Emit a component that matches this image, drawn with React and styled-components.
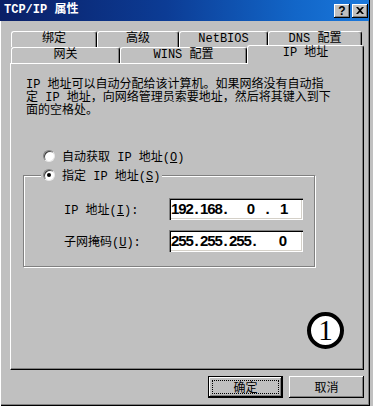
import React from "react";
import styled, { createGlobalStyle } from "styled-components";

const GlobalStyle = createGlobalStyle`
  html, body {
    margin: 0;
    padding: 0;
  }
  body {
    background: #c0c0c0;
    color: #000;
    font-family: "Liberation Mono", "Noto Sans CJK SC", monospace;
    font-size: 12px;
  }
`;

const Window = styled.div`
  display: flex;
  flex-direction: column;
  width: 370px;
  height: 406px;
  box-sizing: border-box;
  background: #c0c0c0;
  box-shadow: inset 1px 0 #fff, inset -1px -1px #000, inset -2px -2px #808080;
`;

const TitleBar = styled.div`
  display: flex;
  align-items: center;
  justify-content: space-between;
  width: 369px;
  height: 21px;
  padding: 0 1px 0 4px;
  box-sizing: border-box;
  background: linear-gradient(to right, #0a1f66 0%, #0c3c95 45%, #1266c8 80%, #1a78dc 100%);
  color: #fff;
`;

const Title = styled.div`
  font-weight: bold;
  font-size: 12px;
  line-height: 21px;
`;

const TitleButtons = styled.div`
  display: flex;
  gap: 2px;
`;

const TitleButton = styled.div`
  display: flex;
  align-items: center;
  justify-content: center;
  width: 16px;
  height: 14px;
  box-sizing: border-box;
  background: #c0c0c0;
  color: #000;
  font-family: "Liberation Sans", sans-serif;
  font-weight: bold;
  font-size: 12px;
  box-shadow: inset -1px -1px #000, inset 1px 1px #fff, inset -2px -2px #808080;
`;

const Body = styled.div`
  display: flex;
  flex-direction: column;
  padding: 10px 6px 0 10px;
`;

const TabStrip = styled.div`
  display: flex;
  flex-direction: column;
  margin-left: 1px;
`;

const TabRow = styled.div`
  display: flex;
  align-items: flex-end;
  height: 16px;
`;

const Tab = styled.div`
  position: relative;
  z-index: ${(p) => (p.$active ? 2 : 0)};
  width: ${(p) => p.$w}px;
  height: ${(p) => (p.$active ? 19 : 16)}px;
  margin-bottom: ${(p) => (p.$active ? -1 : 0)}px;
  box-sizing: border-box;
  background: #c0c0c0;
  border-top: 1px solid #fff;
  border-left: 1px solid #fff;
  border-right: 1px solid #000;
  border-radius: 3px 3px 0 0;
  box-shadow: inset -1px 0 #808080;
  text-align: center;
  line-height: ${(p) => (p.$active ? 14 : 15)}px;
  white-space: nowrap;
`;

const Panel = styled.div`
  position: relative;
  z-index: 1;
  display: flex;
  flex-direction: column;
  height: 307px;
  box-sizing: border-box;
  padding: 15px 12px 0 12px;
  border-top: 1px solid #fff;
  border-left: 1px solid #fff;
  border-right: 1px solid #000;
  border-bottom: 1px solid #000;
  box-shadow: inset -1px -1px #808080;
`;

const Intro = styled.p`
  margin: 0 0 0 3px;
  line-height: 13px;
  white-space: nowrap;
`;

const RadioRow = styled.div`
  display: flex;
  align-items: center;
  gap: 7px;
  height: 14px;
  margin: ${(p) => p.$top || 0}px 0 0 ${(p) => p.$left || 0}px;
  white-space: nowrap;
`;

const Radio = styled.span`
  display: flex;
  align-items: center;
  justify-content: center;
  width: 12px;
  height: 12px;
  box-sizing: border-box;
  border-radius: 50%;
  background: #fff;
  border: 1px solid;
  border-color: #808080 #e8e8e8 #e8e8e8 #808080;
  box-shadow: inset 1px 1px #404040;

  &::after {
    content: "";
    display: ${(p) => (p.$checked ? "block" : "none")};
    width: 4px;
    height: 4px;
    border-radius: 50%;
    background: #000;
  }
`;

const Group = styled.fieldset`
  width: 292px;
  margin: 5px 0 0 0;
  padding: 0 0 14px 0;
  box-sizing: border-box;
  border: 1px solid #808080;
  box-shadow: inset 1px 1px #fff, 1px 1px #fff;
`;

const Legend = styled.legend`
  margin-left: 17px;
  padding: 0 2px;
  background: #c0c0c0;
`;

const Fields = styled.div`
  display: flex;
  flex-direction: column;
  gap: 10px;
  margin-top: 16px;
  padding-left: 40px;
`;

const FieldRow = styled.div`
  display: flex;
  align-items: center;
`;

const FieldLabel = styled.div`
  width: 105px;
  white-space: nowrap;
`;

const IpBox = styled.div`
  display: flex;
  width: 134px;
  height: 22px;
  box-sizing: border-box;
  padding-left: 2px;
  background: #fff;
  box-shadow: inset 1px 1px #808080, inset 2px 2px #000, inset -1px -1px #fff, inset -2px -2px #d4d0c8;
  font-family: "Liberation Sans", sans-serif;
  font-weight: bold;
  font-size: 15px;
  letter-spacing: -1.1px;
  line-height: 22px;
`;

const IpPart = styled.span`
  width: ${(p) => p.$w}px;
  text-align: ${(p) => p.$align || "left"};
`;

const Badge = styled.div`
  position: absolute;
  right: 19px;
  bottom: 20px;
  display: flex;
  align-items: center;
  justify-content: center;
  width: 37px;
  height: 37px;
  box-sizing: border-box;
  border: 4px solid #000;
  border-radius: 50%;
  background: #fff;
  font-family: "Liberation Serif", serif;
  font-size: 29px;
  line-height: 1;
`;

const ButtonRow = styled.div`
  display: flex;
  justify-content: flex-end;
  gap: 6px;
  margin-top: 6px;
`;

const Button = styled.div`
  display: flex;
  align-items: center;
  justify-content: center;
  width: 75px;
  height: 22px;
  box-sizing: border-box;
  background: #c0c0c0;
  border: ${(p) => (p.$default ? "1px solid #000" : "none")};
  box-shadow: inset -1px -1px #000, inset 1px 1px #fff, inset -2px -2px #808080;
  outline: ${(p) => (p.$default ? "1px dotted #000" : "none")};
  outline-offset: -5px;
`;

const ipRows = [
  {
    label: "IP 地址(",
    key: "I",
    parts: [
      { t: "192", w: 21 },
      { t: ".", w: 8, a: "center" },
      { t: "168", w: 21 },
      { t: ".", w: 8, a: "center" },
      { t: "0", w: 25, a: "right" },
      { t: ".", w: 26, a: "center" },
      { t: "1", w: 6, a: "right" },
    ],
  },
  {
    label: "子网掩码(",
    key: "U",
    parts: [
      { t: "255", w: 21 },
      { t: ".", w: 8, a: "center" },
      { t: "255", w: 21 },
      { t: ".", w: 8, a: "center" },
      { t: "255", w: 21 },
      { t: ".", w: 8, a: "center" },
      { t: "0", w: 28, a: "right" },
    ],
  },
];

const CloseIcon = () => (
  <svg width="8" height="7" viewBox="0 0 8 7">
    <path d="M0 0h2l2 2 2-2h2L5 3.5 8 7H6L4 5 2 7H0l3-3.5z" fill="#000" />
  </svg>
);

export default function App() {
  return (
    <>
      <GlobalStyle />
      <Window>
        <TitleBar>
          <Title>TCP/IP 属性</Title>
          <TitleButtons>
            <TitleButton>?</TitleButton>
            <TitleButton>
              <CloseIcon />
            </TitleButton>
          </TitleButtons>
        </TitleBar>
        <Body>
          <TabStrip>
            <TabRow>
              <Tab $w={86}>绑定</Tab>
              <Tab $w={82}>高级</Tab>
              <Tab $w={89}>NetBIOS</Tab>
              <Tab $w={94}>DNS 配置</Tab>
            </TabRow>
            <TabRow>
              <Tab $w={109}>网关</Tab>
              <Tab $w={127}>WINS 配置</Tab>
              <Tab $w={117} $active>
                IP 地址
              </Tab>
            </TabRow>
          </TabStrip>
          <Panel>
            <Intro>
              IP 地址可以自动分配给该计算机。如果网络没有自动指
              <br />
              定 IP 地址，向网络管理员索要地址，然后将其键入到下
              <br />
              面的空格处。
            </Intro>
            <RadioRow $top={31} $left={20}>
              <Radio />
              <span>
                自动获取 IP 地址(<u>O</u>)
              </span>
            </RadioRow>
            <Group>
              <Legend>
                <RadioRow>
                  <Radio $checked />
                  <span>
                    指定 IP 地址(<u>S</u>)
                  </span>
                </RadioRow>
              </Legend>
              <Fields>
                {ipRows.map((row) => (
                  <FieldRow key={row.key}>
                    <FieldLabel>
                      {row.label}
                      <u>{row.key}</u>):
                    </FieldLabel>
                    <IpBox>
                      {row.parts.map((p, i) => (
                        <IpPart key={i} $w={p.w} $align={p.a}>
                          {p.t}
                        </IpPart>
                      ))}
                    </IpBox>
                  </FieldRow>
                ))}
              </Fields>
            </Group>
            <Badge>1</Badge>
          </Panel>
          <ButtonRow>
            <Button $default>确定</Button>
            <Button>取消</Button>
          </ButtonRow>
        </Body>
      </Window>
    </>
  );
}
